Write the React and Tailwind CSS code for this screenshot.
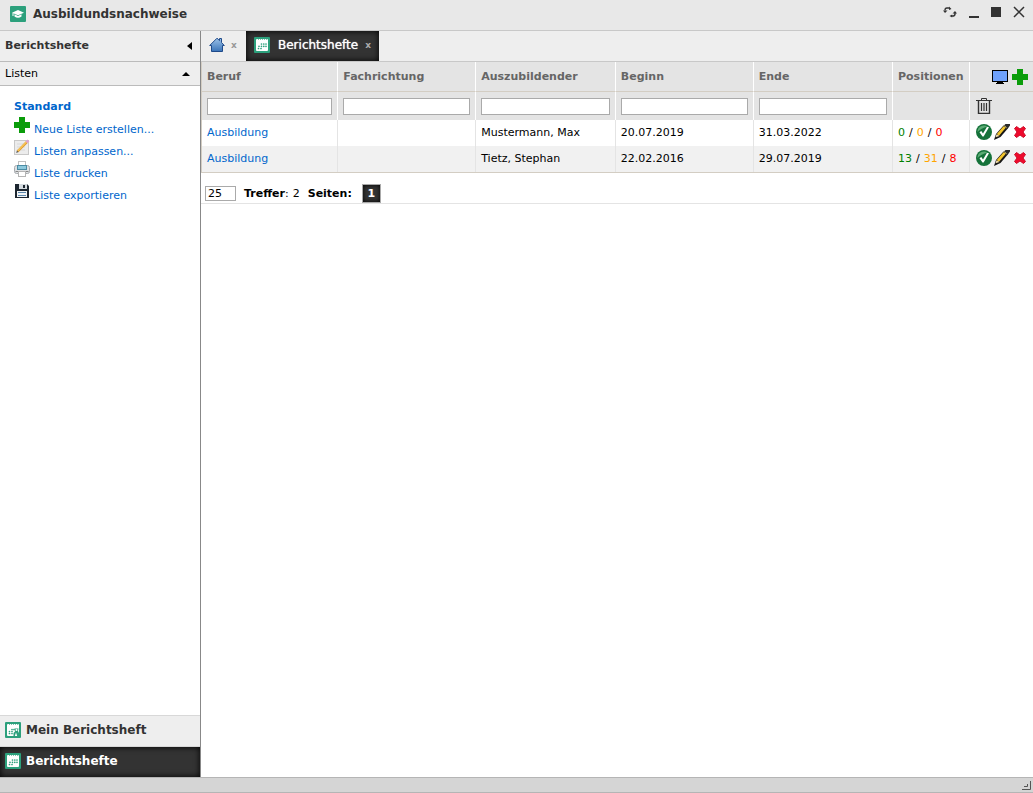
import { useState } from "react";

const columns = ["Beruf", "Fachrichtung", "Auszubildender", "Beginn", "Ende"];

const reports = [
  {
    job: "Ausbildung",
    field: "",
    trainee: "Mustermann, Max",
    start: "20.07.2019",
    end: "31.03.2022",
    positions: [0, 0, 0],
  },
  {
    job: "Ausbildung",
    field: "",
    trainee: "Tietz, Stephan",
    start: "22.02.2016",
    end: "29.07.2019",
    positions: [13, 31, 8],
  },
];

const CapIcon = () => (
  <svg width="16" height="16" viewBox="0 0 16 16" className="shrink-0">
    <rect width="16" height="16" rx="1" fill="#2ca07c" />
    <path d="M8 4 14 6.7 8 9.3 2 6.7z" fill="#fff" />
    <path d="M4.5 8.3 8 9.9l3.5-1.6v2.2Q8 13 4.5 10.5z" fill="#fff" />
    <path d="M3 7v3" stroke="#fff" />
  </svg>
);

const SheetIcon = ({ person }) => (
  <svg width="16" height="16" viewBox="0 0 16 16" className="shrink-0">
    <rect width="16" height="16" rx="1" fill="#2ca07c" />
    <rect x="2" y="2" width="12" height="12" rx="1" fill="#fff" />
    <path d="M4 2.500h9" stroke="#2ca07c" strokeDasharray="1 1" opacity=".6" />
    <g stroke="#2ca07c" strokeWidth="1.700" strokeLinecap="round">
      {person ? (
        <path d="M7 7.500h0M9 7.500h0M4.500 9.500h0M7 9.500h0M4.500 11.500h0M7 11.500h0" />
      ) : (
        <path d="M7.500 7h0M9.800 7h0M12 7h0M5 9.300h0M7.500 9.300h0M9.800 9.300h0M12 9.300h0M4.500 11.500h0M7 11.500h0" />
      )}
    </g>
    {person && (
      <>
        <path d="M8.500 14v-3l1.500-1.500L9.500 6.500h4L13 9l1 2v3z" fill="#2ca07c" />
        <path d="M9.800 14l1.200-3.500L12.200 14z" fill="#fff" />
        <circle cx="11.500" cy="8" r="1" fill="#fff" />
      </>
    )}
  </svg>
);

const HouseIcon = () => (
  <svg width="16" height="16" viewBox="0 0 16 16" className="shrink-0">
    <defs>
      <linearGradient id="house" x1="0" y1="0" x2="0" y2="1">
        <stop offset="0" stopColor="#9cc2e8" />
        <stop offset="1" stopColor="#3a74b8" />
      </linearGradient>
    </defs>
    <path
      d="M8 1.2 10.500 3.600V1.500h2v4L15.300 8.500H13.500v6h-11v-6H.7z"
      fill="url(#house)"
      stroke="#1f4a8a"
      strokeLinejoin="round"
    />
  </svg>
);

const PlusIcon = () => (
  <svg width="16" height="16" viewBox="0 0 16 16" className="shrink-0">
    <path d="M5 0h6v5h5v6h-5v5H5v-5H0V5h5z" fill="#0a9c0a" />
  </svg>
);

const NoteIcon = () => (
  <svg width="16" height="16" viewBox="0 0 16 16" className="shrink-0">
    <rect x=".5" y="1.5" width="14" height="14" fill="#ececec" stroke="#c8c8c8" />
    <path d="M3 5h8M3 8h8M3 11h8" stroke="#d8d8d8" />
    <path d="M3.500 12.500 13 2.800" stroke="#e09a2c" strokeWidth="2.500" />
    <path d="M3.500 12.200 12.700 2.600" stroke="#fbcb5c" strokeWidth="1.200" />
    <path d="M12.500 3.300 14.500 1.300" stroke="#e0a3cf" strokeWidth="2.500" />
    <path d="M2.200 14 3 11.600 4.600 13z" fill="#555" />
  </svg>
);

const PrinterIcon = () => (
  <svg width="16" height="16" viewBox="0 0 16 16" className="shrink-0">
    <rect x="4.500" y=".5" width="7" height="5" fill="#fff" stroke="#c0c0c0" />
    <rect x=".5" y="4.500" width="15" height="8" rx="2" fill="#dfe1e3" stroke="#a8acb0" />
    <rect x="3.500" y="4.500" width="9" height="4" fill="#8cc8dc" stroke="#4b8ba3" />
    <path d="M1.500 10.500h13" stroke="#888" />
    <rect x="4.500" y="10.500" width="7" height="5" fill="#fff" stroke="#b5b5b5" />
  </svg>
);

const FloppyIcon = () => (
  <svg width="16" height="16" viewBox="0 0 16 16" className="shrink-0">
    <path d="M1 1h12l2 2v12H1z" fill="#1d2630" />
    <rect x="5" y="1" width="8" height="5" fill="#d5dbe0" />
    <rect x="9" y="2" width="2" height="3" fill="#1d2630" />
    <rect x="3" y="8" width="10" height="6" fill="#f2f4f6" />
    <path d="M4 9.500h8M4 12.500h8" stroke="#5b87ad" />
  </svg>
);

const MonitorIcon = () => (
  <svg width="16" height="16" viewBox="0 0 16 16" className="shrink-0">
    <rect x=".5" y="1.500" width="15" height="11" fill="#6fa1fb" stroke="#000" />
    <path d="M5 13h6v1h1v1H4v-1h1z" fill="#000" />
  </svg>
);

const TrashIcon = () => (
  <svg width="16" height="16" viewBox="0 0 16 16" fill="none" stroke="#333">
    <path d="M0 2.500h16M5.500 2V.5h5V2" />
    <path d="M2.500 3v12.500h11V3" strokeWidth="1.400" />
    <path d="M5.500 5v8M8 5v8M10.500 5v8" strokeWidth="1.200" />
  </svg>
);

const CheckIcon = () => (
  <svg width="16" height="16" viewBox="0 0 16 16" className="shrink-0">
    <circle cx="8" cy="8" r="8" fill="#15723a" />
    <path d="M1.500 8a6.500 6.500 0 0 1 10-5.500Q5 4 1.500 8z" fill="#5cab75" />
    <path d="M3.500 8.300 5.300 7 7 9.500 11 2.800 13 3.200 7.600 12.500H6.500z" fill="#fff" />
  </svg>
);

const PencilIcon = () => (
  <svg width="16" height="16" viewBox="0 0 16 16" className="shrink-0">
    <path d="M0 16 2 10 9.500 1.500 13.800 4.500 6.500 13z" fill="#171717" />
    <path d="M2.800 10 9.800 2 12 3.500 5 11.700z" fill="#f3c52c" />
    <path d="M9.500 2 11.500 0h4.500v1.500L13.500 5z" fill="#2b2b2b" />
    <path d="M1.500 13.300 2.500 10.300 5.500 12z" fill="#f2dfae" />
    <path d="M10.300 1.800 12.600 3.800" stroke="#e8d070" />
  </svg>
);

const DeleteIcon = () => (
  <svg width="16" height="16" viewBox="0 0 16 16" className="shrink-0">
    <path
      d="M4.500 2.500 8 5 11.500 2.500 13.500 4.500 11 8 13.500 11.500 11.500 13.500 8 11 4.500 13.500 2.500 11.500 5 8 2.500 4.500z"
      fill="#ee0a2c"
      stroke="#cc0f2b"
      strokeLinejoin="round"
    />
  </svg>
);

const RefreshIcon = () => (
  <svg width="14" height="12" viewBox="0 0 14 12" fill="none" stroke="#333" strokeWidth="1.400">
    <path d="M6 2H4Q2 2 2 4.500" />
    <path d="M9 10h1.500q1.800-.5 1.500-3" />
    <path d="M0 4.500 2 7 4.500 4.500zM9.500 7.500 12 5 14 7.500zM6 .5 8.500 3 6 4z" fill="#333" stroke="none" />
    <path d="M9.200 8.500 6.500 10l2.700 1.500z" fill="#333" stroke="none" />
  </svg>
);

const listActions = [
  { label: "Neue Liste erstellen...", Icon: PlusIcon },
  { label: "Listen anpassen...", Icon: NoteIcon },
  { label: "Liste drucken", Icon: PrinterIcon },
  { label: "Liste exportieren", Icon: FloppyIcon },
];

const TitleBar = () => (
  <header className="flex h-[31px] shrink-0 items-center justify-between border-b border-[#c8c8c8] bg-[#e8e8e8] pl-[10px] pr-2">
    <div className="flex items-center gap-[7px] pb-[3px]">
      <CapIcon />
      <h1 className="text-[12px] font-bold text-[#333]">Ausbildundsnachweise</h1>
    </div>
    <div className="flex items-center gap-3 pb-[6px]">
      <button type="button" aria-label="Aktualisieren">
        <RefreshIcon />
      </button>
      <button type="button" aria-label="Minimieren" className="flex h-3 w-[10px] items-end">
        <span className="h-[2px] w-full bg-[#333]"></span>
      </button>
      <button type="button" aria-label="Maximieren" className="h-[10px] w-[10px] bg-[#333]"></button>
      <button type="button" aria-label="Schließen">
        <svg width="12" height="12" viewBox="0 0 12 12" stroke="#333" strokeWidth="1.500">
          <path d="M1 1l10 10M11 1 1 11" />
        </svg>
      </button>
    </div>
  </header>
);

const Sidebar = () => (
  <aside className="flex w-[201px] shrink-0 flex-col border-r border-[#888]">
    <button
      type="button"
      className="flex h-[31px] shrink-0 items-center justify-between border-b border-[#bbb] bg-[#eee] pl-[5px] pr-2 font-bold text-[#333]"
    >
      Berichtshefte
      <svg width="5" height="8" viewBox="0 0 5 8">
        <path d="M5 0v8L0 4z" />
      </svg>
    </button>
    <button
      type="button"
      className="flex h-6 shrink-0 items-center justify-between border-b border-[#bbb] bg-[#eee] pl-[5px] pr-[10px]"
    >
      Listen
      <svg width="8" height="4" viewBox="0 0 8 4">
        <path d="M4 0l4 4H0z" />
      </svg>
    </button>
    <nav className="flex grow flex-col px-[14px] pt-[13px] text-[#0066cc]">
      <a href="#standard" className="h-[18px] font-bold">
        Standard
      </a>
      <ul>
        {listActions.map(({ label, Icon }) => (
          <li key={label} className="h-[22px]">
            <a href="#liste" className="flex gap-1">
              <Icon />
              <span className="pt-1 leading-[18px]">{label}</span>
            </a>
          </li>
        ))}
      </ul>
    </nav>
    <button
      type="button"
      className="flex h-8 shrink-0 items-center gap-[5px] border-y border-[#d8d8d8] bg-[#eee] pb-[2px] pl-[5px] text-[12px] font-bold text-[#333]"
    >
      <SheetIcon person />
      Mein Berichtsheft
    </button>
    <button
      type="button"
      className="flex h-[30px] shrink-0 items-center gap-[5px] bg-[#333] pb-[2px] pl-[5px] text-[12px] font-bold text-white shadow-[inset_0_0_6px_#000]"
    >
      <SheetIcon />
      Berichtshefte
    </button>
  </aside>
);

const Tabs = () => (
  <div className="flex h-[31px] shrink-0 border-b border-[#c8c8c8] bg-[#eee]">
    <div className="flex w-[45px] items-center gap-[6px] pb-[2px] pl-2">
      <button type="button" aria-label="Startseite">
        <HouseIcon />
      </button>
      <button type="button" className="text-[9px] font-bold text-[#999]">
        x
      </button>
    </div>
    <div className="flex items-center gap-[7px] bg-[#333] px-2 pb-[2px] shadow-[inset_0_0_6px_#000]">
      <button
        type="button"
        className="flex items-center gap-2 text-[12px] text-white [text-shadow:0_0_1px_#fff]"
      >
        <SheetIcon />
        Berichtshefte
      </button>
      <button type="button" className="text-[9px] font-bold text-[#aaa]">
        x
      </button>
    </div>
  </div>
);

const ReportTable = () => (
  <table className="w-full table-fixed border-separate border-spacing-0 border-b border-l border-[#d3cdc3] text-left">
    <colgroup>
      <col className="w-[16.4%]" />
      <col className="w-[16.6%]" />
      <col className="w-[16.8%]" />
      <col className="w-[16.6%]" />
      <col />
      <col className="w-[77px]" />
      <col className="w-[63px]" />
    </colgroup>
    <thead className="bg-[#e4e4e4]">
      <tr className="h-[30px] text-[#666]">
        {columns.map((name) => (
          <th key={name} className="border-b border-r border-b-[#d3cdc3] border-r-white px-[5px] py-0">
            {name}
          </th>
        ))}
        <th className="border-b border-r border-b-[#d3cdc3] border-r-white px-[5px] py-0">
          Positionen
        </th>
        <th className="border-b border-[#d3cdc3] p-0">
          <div className="flex justify-end gap-1 pr-[5px]">
            <button type="button" aria-label="Anzeige">
              <MonitorIcon />
            </button>
            <button type="button" aria-label="Neu">
              <PlusIcon />
            </button>
          </div>
        </th>
      </tr>
      <tr className="h-7">
        {columns.map((name) => (
          <td key={name} className="border-r border-r-white px-[5px] py-0">
            <input
              type="text"
              aria-label={name}
              className="block h-[17px] w-full border border-[#aaa] bg-white px-[2px]"
            />
          </td>
        ))}
        <td className="border-r border-r-white p-0"></td>
        <td className="px-[6px] py-0">
          <button type="button" aria-label="Filter leeren" className="block">
            <TrashIcon />
          </button>
        </td>
      </tr>
    </thead>
    <tbody>
      {reports.map((r) => (
        <tr key={r.trainee} className="h-[26px] even:bg-[#f1f1f1]">
          <td className="border-r border-[#e4e4e4] px-[5px] py-0">
            <a href="#bericht" className="text-[#0066cc]">
              {r.job}
            </a>
          </td>
          <td className="border-r border-[#e4e4e4] px-[5px] py-0">{r.field}</td>
          <td className="border-r border-[#e4e4e4] px-[5px] py-0">{r.trainee}</td>
          <td className="border-r border-[#e4e4e4] px-[5px] py-0">{r.start}</td>
          <td className="border-r border-[#e4e4e4] px-[5px] py-0">{r.end}</td>
          <td className="border-r border-[#e4e4e4] px-[5px] py-0">
            <div className="flex gap-1">
              <span className="text-[#008000]">{r.positions[0]}</span>
              <span>/</span>
              <span className="text-[#ffa500]">{r.positions[1]}</span>
              <span>/</span>
              <span className="text-[#ff0000]">{r.positions[2]}</span>
            </div>
          </td>
          <td className="p-0">
            <div className="flex justify-end gap-[2px] pb-[2px] pr-[5px]">
              <button type="button" aria-label="Freigeben">
                <CheckIcon />
              </button>
              <button type="button" aria-label="Bearbeiten">
                <PencilIcon />
              </button>
              <button type="button" aria-label="Löschen">
                <DeleteIcon />
              </button>
            </div>
          </td>
        </tr>
      ))}
    </tbody>
  </table>
);

const Pager = () => {
  const [pageSize, setPageSize] = useState("25");
  return (
    <div className="flex h-[31px] items-end border-b border-[#e4e4e4] pl-1">
      <input
        type="text"
        aria-label="Treffer pro Seite"
        value={pageSize}
        onChange={(e) => setPageSize(e.target.value)}
        className="mb-[2px] h-[15px] w-[31px] border border-[#aaa] bg-white px-[2px]"
      />
      <p className="ml-2 flex gap-1 leading-[18px]">
        <span>
          <b>Treffer</b>:
        </span>
        <span>2</span>
      </p>
      <p className="ml-2 leading-[18px]">
        <b>Seiten:</b>
      </p>
      <button
        type="button"
        className="ml-[10px] h-[19px] w-[19px] border border-[#aaa] bg-[#333] font-bold text-white shadow-[inset_0_0_4px_#000]"
      >
        1
      </button>
    </div>
  );
};

const App = () => {
  return (
    <div className="flex h-screen flex-col bg-white font-['DejaVu_Sans',sans-serif] text-[11px] leading-4 text-black">
      <TitleBar />
      <div className="flex min-h-0 grow">
        <Sidebar />
        <main className="min-w-0 grow">
          <Tabs />
          <ReportTable />
          <Pager />
        </main>
      </div>
      <footer className="flex h-4 shrink-0 items-end justify-end border-y border-[#b5b5b5] bg-[#d5d5d5]">
        <svg width="12" height="12" viewBox="0 0 12 12" fill="none" stroke="#555">
          <path d="M9.500 1v8.500H1M6.500 4v2.500H3" />
        </svg>
      </footer>
    </div>
  );
};

export default App;
